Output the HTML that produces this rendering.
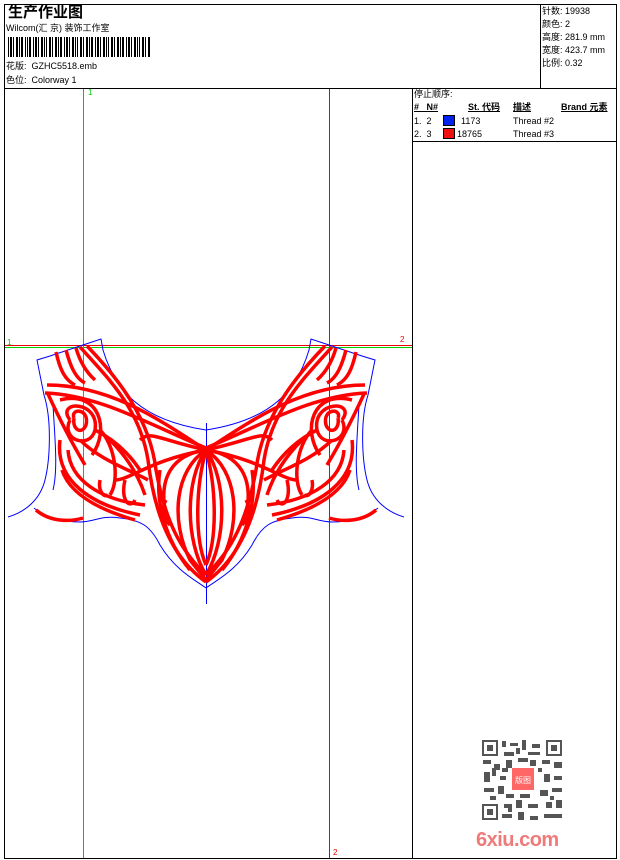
<!DOCTYPE html>
<html><head><meta charset="utf-8"><style>
html,body{margin:0;padding:0;background:#fff;}
body{width:620px;height:860px;position:relative;overflow:hidden;font-family:"Liberation Sans","Noto Sans CJK SC",sans-serif;font-size:9px;color:#000;}
.t{position:absolute;white-space:nowrap;line-height:1;}
</style></head><body>
<svg width="620" height="860" style="position:absolute;left:0;top:0" xmlns="http://www.w3.org/2000/svg">
<g fill="none" stroke="#000" stroke-width="1">
<rect x="4.5" y="4.5" width="612" height="854"/>
<line x1="4" y1="88.5" x2="617" y2="88.5"/>
<line x1="540.5" y1="4" x2="540.5" y2="88"/>
<line x1="412.5" y1="88" x2="412.5" y2="858"/>
<line x1="412" y1="141.5" x2="617" y2="141.5"/>
</g>
<g fill="#000">
<rect x="8" y="37" width="1" height="20"/><rect x="10" y="37" width="2" height="20"/><rect x="13" y="37" width="1" height="20"/><rect x="16" y="37" width="2" height="20"/><rect x="19" y="37" width="1" height="20"/><rect x="21" y="37" width="2" height="20"/><rect x="25" y="37" width="1" height="20"/><rect x="27" y="37" width="1" height="20"/><rect x="29" y="37" width="2" height="20"/><rect x="33" y="37" width="1" height="20"/><rect x="35" y="37" width="2" height="20"/><rect x="38" y="37" width="1" height="20"/><rect x="41" y="37" width="2" height="20"/><rect x="44" y="37" width="1" height="20"/><rect x="46" y="37" width="1" height="20"/><rect x="49" y="37" width="2" height="20"/><rect x="52" y="37" width="1" height="20"/><rect x="55" y="37" width="2" height="20"/><rect x="58" y="37" width="1" height="20"/><rect x="60" y="37" width="2" height="20"/><rect x="64" y="37" width="1" height="20"/><rect x="66" y="37" width="2" height="20"/><rect x="69" y="37" width="1" height="20"/><rect x="72" y="37" width="2" height="20"/><rect x="75" y="37" width="1" height="20"/><rect x="77" y="37" width="1" height="20"/><rect x="80" y="37" width="2" height="20"/><rect x="83" y="37" width="1" height="20"/><rect x="86" y="37" width="2" height="20"/><rect x="89" y="37" width="1" height="20"/><rect x="91" y="37" width="2" height="20"/><rect x="95" y="37" width="1" height="20"/><rect x="97" y="37" width="2" height="20"/><rect x="100" y="37" width="1" height="20"/><rect x="103" y="37" width="2" height="20"/><rect x="106" y="37" width="1" height="20"/><rect x="108" y="37" width="1" height="20"/><rect x="111" y="37" width="2" height="20"/><rect x="114" y="37" width="1" height="20"/><rect x="117" y="37" width="2" height="20"/><rect x="120" y="37" width="1" height="20"/><rect x="122" y="37" width="2" height="20"/><rect x="126" y="37" width="1" height="20"/><rect x="128" y="37" width="2" height="20"/><rect x="131" y="37" width="1" height="20"/><rect x="134" y="37" width="2" height="20"/><rect x="137" y="37" width="1" height="20"/><rect x="139" y="37" width="1" height="20"/><rect x="142" y="37" width="2" height="20"/><rect x="145" y="37" width="1" height="20"/><rect x="148" y="37" width="2" height="20"/>
</g>
<line x1="83.5" y1="89" x2="83.5" y2="858" stroke="#0c0" stroke-width="1"/>
<line x1="329.5" y1="89" x2="329.5" y2="858" stroke="#e00" stroke-width="1"/>
<line x1="5" y1="345.5" x2="412" y2="345.5" stroke="#e00"/>
<line x1="5" y1="347.5" x2="412" y2="347.5" stroke="#0c0"/>
<line x1="206.5" y1="423" x2="206.5" y2="604" stroke="#00f"/>
<g id="half">
<g fill="none" stroke="#00f" stroke-width="1">
<path d="M8,517 C25,512 40,500 45,480 C50,460 52,420 44,395 L37,360 L50,356 L83,345 L101,339 L103,350 C115,390 140,420 206,430"/>
<path d="M34,508 C45,517 60,522 80,522 C95,522 100,515 120,518 C140,520 150,525 160,545 C175,570 195,580 206,588"/>
<path d="M53,405 C55,440 58,470 53,490"/>
</g>
<g fill="none" stroke="#f00" stroke-width="3.5">
<path d="M80,347 C110,380 140,410 148,460 C155,520 175,560 206,582"/>
<path d="M87,346 C120,380 150,420 156,470 C165,520 180,550 206,575"/>
<path d="M45,393 C100,395 150,425 206,448"/>
<path d="M47,385 C110,385 160,420 206,450"/>
<path d="M56,352 C60,370 65,380 75,385"/>
<path d="M66,350 C70,365 75,378 85,383"/>
<path d="M76,348 C80,362 86,372 95,380"/>
<path d="M48,394 C60,420 70,440 85,465"/>
<path d="M70,420 C55,400 100,400 95,430 C90,450 60,440 70,420"/>
<path d="M74,418 C70,408 90,408 86,425 C82,435 72,430 74,418"/>
<path d="M60,400 C100,390 110,430 92,455"/>
<path d="M60,440 C55,480 90,505 140,515"/>
<path d="M68,450 C70,480 100,500 145,505"/>
<path d="M62,470 C70,495 100,510 135,520"/>
<path d="M80,440 C100,460 130,470 148,480"/>
<path d="M95,430 C115,440 130,455 140,470"/>
<path d="M100,430 C115,445 120,480 110,495"/>
<path d="M110,440 C130,460 140,480 145,495"/>
<path d="M125,480 C120,500 130,510 135,500"/>
<path d="M100,480 C98,490 103,498 108,495"/>
<path d="M36,510 C50,522 70,522 83,518"/>
<path d="M206,450 C175,470 170,520 190,560 L206,580"/>
<path d="M206,450 C185,480 185,540 206,575"/>
<path d="M206,450 C195,490 195,540 206,565"/>
<path d="M206,450 C170,455 160,480 165,510"/>
<path d="M206,450 C150,460 130,480 115,480"/>
<path d="M206,450 C160,440 150,430 140,440"/>
<path d="M166,500 C160,510 165,520 170,525"/>
<path d="M160,470 C155,500 165,540 190,570"/>
</g>
</g>
<use href="#half" transform="translate(412,0) scale(-1,1)"/>
</svg>
<div class="t" style="left:8px;top:5px;font-size:15px;font-weight:bold;">生产作业图</div>
<div class="t" style="left:6px;top:24px;font-size:9px;">Wilcom(汇 京) 装饰工作室</div>
<div class="t" style="left:6px;top:62px;">花版:&nbsp; GZHC5518.emb</div>
<div class="t" style="left:6px;top:76px;">色位:&nbsp; Colorway 1</div>
<div class="t" style="left:542px;top:7px;">针数: 19938</div>
<div class="t" style="left:542px;top:20px;">颜色: 2</div>
<div class="t" style="left:542px;top:33px;">高度: 281.9 mm</div>
<div class="t" style="left:542px;top:46px;">宽度: 423.7 mm</div>
<div class="t" style="left:542px;top:59px;">比例: 0.32</div>
<div class="t" style="left:88px;top:89px;color:#0c0;font-size:8px;">1</div>
<div class="t" style="left:7px;top:339px;color:#0c0;font-size:8px;">1</div>
<div class="t" style="left:400px;top:336px;color:#e00;font-size:8px;">2</div>
<div class="t" style="left:333px;top:849px;color:#e00;font-size:8px;">2</div>
<div class="t" style="left:414px;top:90px;">停止顺序:</div>
<div class="t" style="left:414px;top:103px;font-weight:bold;text-decoration:underline;">#&nbsp;&nbsp; N#</div>
<div class="t" style="left:468px;top:103px;font-weight:bold;text-decoration:underline;">St. 代码</div>
<div class="t" style="left:513px;top:103px;font-weight:bold;text-decoration:underline;">描述</div>
<div class="t" style="left:561px;top:103px;font-weight:bold;text-decoration:underline;">Brand 元素</div>
<div class="t" style="left:414px;top:117px;">1.&nbsp; 2</div>
<div style="position:absolute;left:443px;top:115px;width:10px;height:9px;background:#0022ee;border:1px solid #000;"></div>
<div class="t" style="left:461px;top:117px;">1173</div>
<div class="t" style="left:513px;top:117px;">Thread #2</div>
<div class="t" style="left:414px;top:130px;">2.&nbsp; 3</div>
<div style="position:absolute;left:443px;top:128px;width:10px;height:9px;background:#ee1111;border:1px solid #000;"></div>
<div class="t" style="left:457px;top:130px;">18765</div>
<div class="t" style="left:513px;top:130px;">Thread #3</div>
<svg width="86" height="86" style="position:absolute;left:480px;top:738px" viewBox="0 0 86 86">
<g fill="#555">
<rect x="2" y="2" width="16" height="16"/><rect x="66" y="2" width="16" height="16"/><rect x="2" y="66" width="16" height="16"/>
</g>
<g fill="#fff"><rect x="4" y="4" width="12" height="12"/><rect x="68" y="4" width="12" height="12"/><rect x="4" y="68" width="12" height="12"/></g>
<g fill="#555"><rect x="7" y="7" width="6" height="6"/><rect x="71" y="7" width="6" height="6"/><rect x="7" y="71" width="6" height="6"/>
<rect x="22" y="3" width="4" height="6"/><rect x="30" y="5" width="8" height="3"/><rect x="42" y="2" width="4" height="10"/><rect x="52" y="6" width="8" height="4"/><rect x="24" y="14" width="10" height="4"/><rect x="48" y="14" width="12" height="3"/><rect x="36" y="10" width="4" height="6"/>
<rect x="3" y="22" width="8" height="4"/><rect x="14" y="26" width="6" height="6"/><rect x="26" y="22" width="6" height="8"/><rect x="62" y="22" width="8" height="4"/><rect x="74" y="24" width="8" height="6"/><rect x="38" y="20" width="10" height="4"/><rect x="50" y="22" width="6" height="6"/>
<rect x="4" y="34" width="6" height="10"/><rect x="20" y="38" width="6" height="4"/><rect x="64" y="36" width="6" height="8"/><rect x="74" y="38" width="8" height="4"/><rect x="12" y="30" width="4" height="8"/><rect x="22" y="30" width="6" height="4"/><rect x="58" y="30" width="4" height="4"/>
<rect x="4" y="50" width="10" height="4"/><rect x="18" y="48" width="6" height="8"/><rect x="26" y="56" width="8" height="4"/><rect x="60" y="52" width="8" height="6"/><rect x="72" y="50" width="10" height="4"/><rect x="10" y="58" width="6" height="4"/><rect x="40" y="56" width="10" height="4"/><rect x="70" y="58" width="4" height="4"/>
<rect x="24" y="66" width="8" height="4"/><rect x="36" y="62" width="6" height="8"/><rect x="48" y="66" width="10" height="4"/><rect x="66" y="64" width="6" height="6"/><rect x="76" y="62" width="6" height="8"/>
<rect x="22" y="76" width="10" height="4"/><rect x="38" y="74" width="6" height="8"/><rect x="50" y="78" width="8" height="4"/><rect x="64" y="76" width="18" height="4"/><rect x="28" y="70" width="4" height="4"/>
</g>
<rect x="32" y="30" width="22" height="22" fill="#f66"/>
<text x="43" y="45" font-size="8" fill="#fff" text-anchor="middle" font-family="Noto Sans CJK SC">版图</text>
</svg>
<div class="t" style="left:476px;top:830px;font-size:20px;font-weight:bold;color:#f07a7a;letter-spacing:-0.5px;">6xiu.com</div>
</body></html>
